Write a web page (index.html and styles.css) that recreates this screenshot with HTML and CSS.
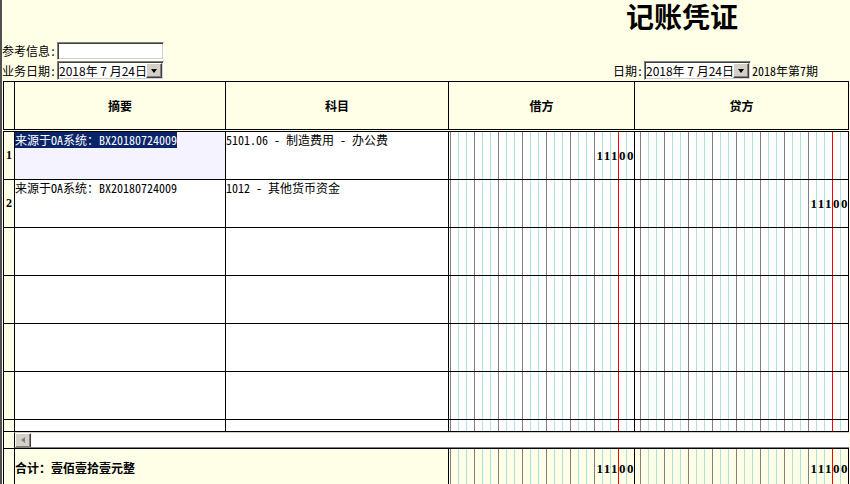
FILE: index.html
```html
<!DOCTYPE html>
<html lang="zh-CN">
<head>
    <meta charset="UTF-8">
    <title>记账凭证</title>
    <link rel="stylesheet" href="styles.css">
</head>
<body>
    <div class="frame">
        <h1 class="title">记账凭证</h1>

        <div class="line">
            <label>参考信息:</label><input type="text" class="txt">
        </div>
        <div class="line bar">
            <span class="group">
                <label>业务日期:</label>
                <span class="combo"><span class="combo-text">2018年 7 月24日</span><span class="combo-btn"></span></span>
            </span>
            <span class="group">
                <label>日期:</label>
                <span class="combo"><span class="combo-text">2018年 7 月24日</span><span class="combo-btn"></span></span>
                <span class="period">2018年第7期</span>
            </span>
        </div>

        <div class="sheet">
            <!-- column titles -->
            <div class="row head">
                <div class="no"></div>
                <div>摘要</div>
                <div>科目</div>
                <div>借方</div>
                <div>贷方</div>
            </div>

            <!-- entry lines -->
            <div class="rows">
                <div class="row">
                    <div class="no">1</div>
                    <div class="memo active"><span class="sel">来源于OA系统：BX20180724009</span></div>
                    <div class="acct">5101.06 - 制造费用 - 办公费</div>
                    <div class="money"><span class="amt">11100</span></div>
                    <div class="money"></div>
                </div>
                <div class="row">
                    <div class="no">2</div>
                    <div class="memo">来源于OA系统：BX20180724009</div>
                    <div class="acct">1012 - 其他货币资金</div>
                    <div class="money"></div>
                    <div class="money"><span class="amt">11100</span></div>
                </div>
                <div class="row"><div class="no"></div><div class="memo"></div><div class="acct"></div><div class="money"></div><div class="money"></div></div>
                <div class="row"><div class="no"></div><div class="memo"></div><div class="acct"></div><div class="money"></div><div class="money"></div></div>
                <div class="row"><div class="no"></div><div class="memo"></div><div class="acct"></div><div class="money"></div><div class="money"></div></div>
                <div class="row"><div class="no"></div><div class="memo"></div><div class="acct"></div><div class="money"></div><div class="money"></div></div>
                <div class="row"><div class="no"></div><div class="memo"></div><div class="acct"></div><div class="money"></div><div class="money"></div></div>
            </div>

            <!-- horizontal scroller of the entry area -->
            <div class="row scroll">
                <div class="no"></div>
                <div class="hbar"><span class="hbar-left"></span></div>
            </div>

            <!-- totals -->
            <div class="row total">
                <div class="no"></div>
                <div class="sum">合计：壹佰壹拾壹元整</div>
                <div class="money"><span class="amt">11100</span></div>
                <div class="money"><span class="amt">11100</span></div>
            </div>
        </div>
    </div>
</body>
</html>
```

FILE: styles.css
```css
html, body {
    margin: 0;
    padding: 0;
}
body {
    background: #FFFFE7;
    color: #000;
    font-family: "Noto Sans Mono CJK SC", "Noto Sans CJK SC", monospace;
    font-size: 12px;
    overflow: hidden;
}
.frame {
    height: 100vh;
    box-sizing: border-box;
    border-left: 2px solid #505050;
}
.title {
    margin: 0;
    height: 38px;
    padding: 3px 0 0 624px;
    font-family: "Liberation Sans", "Noto Sans CJK SC", sans-serif;
    font-size: 28px;
    line-height: 32px;
    font-weight: 700;
}
.line {
    display: flex;
    align-items: center;
    height: 19px;
    white-space: nowrap;
}
.line label {
    line-height: 14px;
}
.bar {
    height: 21px;
    width: 816px;
    justify-content: space-between;
}
.group {
    display: flex;
    align-items: center;
}
.txt {
    width: 107px;
    height: 18px;
    box-sizing: border-box;
    margin: 0 0 0 1px;
    padding: 0;
    border: 1px solid;
    border-color: #808080 #fff #fff #808080;
    box-shadow: inset 1px 1px #404040, inset -1px -1px #D4D0C8;
    background: #fff;
}
.combo {
    display: flex;
    align-items: center;
    width: 107px;
    height: 19px;
    box-sizing: border-box;
    margin-left: 1px;
    border: 1px solid;
    border-color: #808080 #fff #fff #808080;
    box-shadow: inset 1px 1px #404040, inset -1px -1px #D4D0C8;
    background: #fff;
}
.combo-text {
    flex: 1;
    min-width: 0;
    padding-left: 1px;
    font-family: "Noto Sans CJK SC", sans-serif;
    line-height: 14px;
    white-space: nowrap;
}
.combo-btn {
    position: relative;
    flex: none;
    width: 16px;
    height: 15px;
    margin-right: 1px;
    box-sizing: border-box;
    background: #D4D0C8;
    border: 1px solid;
    border-color: #fff #404040 #404040 #fff;
    box-shadow: inset -1px -1px #808080;
}
.combo-btn::after {
    content: "";
    position: absolute;
    left: 4px;
    top: 5px;
    border-style: solid;
    border-width: 4px 3.5px 0;
    border-color: #000 transparent transparent;
}
.period {
    margin-left: 1px;
    line-height: 14px;
}

/* voucher grid */
.sheet {
    margin-left: 1px;
    width: 846px;
}
.row {
    display: grid;
    grid-template-columns: 11px 211px 223px 186px 215px;
    box-sizing: border-box;
}
.row > div {
    border-left: 1px solid #000;
    overflow: hidden;
}
.row > div:last-child {
    border-right: 1px solid #000;
}
.no {
    background: #FFFFE7;
    font-family: "Liberation Serif", serif;
    font-weight: 700;
    display: flex;
    align-items: center;
    justify-content: center;
}
.head {
    height: 49px;
    border-top: 1px solid #000;
    border-bottom: 1px solid #000;
    font-weight: 700;
}
.head > div {
    display: flex;
    align-items: center;
    justify-content: center;
}
.rows {
    height: 300px;
    margin-top: 1px;
    overflow: hidden;
}
.rows .row {
    height: 48px;
    border-top: 1px solid #000;
    background: #fff;
}
.memo, .acct {
    padding-top: 1px;
    line-height: 13px;
    white-space: nowrap;
}
.memo.active {
    background: #F5F3FF;
}
.sel {
    background: #0A246A;
    color: #fff;
}
.money {
    display: flex;
    align-items: center;
    justify-content: flex-end;
    background-image:
        linear-gradient(#f00, #f00),
        linear-gradient(to right, #808080 1px, transparent 1px),
        linear-gradient(to right, #B0DFDF 1px, transparent 1px);
    background-size: 1px 100%, 24px 100%, 8px 100%;
    background-repeat: no-repeat, repeat-x, repeat-x;
    background-position: right 15px top, right -8px top, right top;
}
.amt {
    font-family: "Liberation Serif", serif;
    font-weight: 700;
    font-size: 13px;
    letter-spacing: 1.5px;
    margin-right: -1px;
}
.scroll {
    grid-template-columns: 11px 1fr;
    height: 17px;
    border-top: 1px solid #000;
}
.hbar {
    background: #fff;
    border-top: 1px solid #D4D0C8;
    border-bottom: 1px solid #808080;
    box-sizing: border-box;
    display: flex;
}
.row > .hbar:last-child {
    border-right: none;
}
.hbar-left {
    position: relative;
    width: 16px;
    height: 15px;
    box-sizing: border-box;
    background: #D4D0C8;
    border: 1px solid;
    border-color: #fff #404040 #404040 #fff;
    box-shadow: inset -1px -1px #808080;
}
.hbar-left::after {
    content: "";
    position: absolute;
    left: 5px;
    top: 3px;
    border-style: solid;
    border-width: 3.5px 4px 3.5px 0;
    border-color: transparent #808080 transparent transparent;
}
.total {
    grid-template-columns: 11px 434px 186px 215px;
    height: 40px;
    border-top: 1px solid #000;
}
.total > div {
    background-color: #FFFFE7;
}
.sum {
    display: flex;
    align-items: center;
    font-weight: 700;
    padding-bottom: 3px;
}
```
